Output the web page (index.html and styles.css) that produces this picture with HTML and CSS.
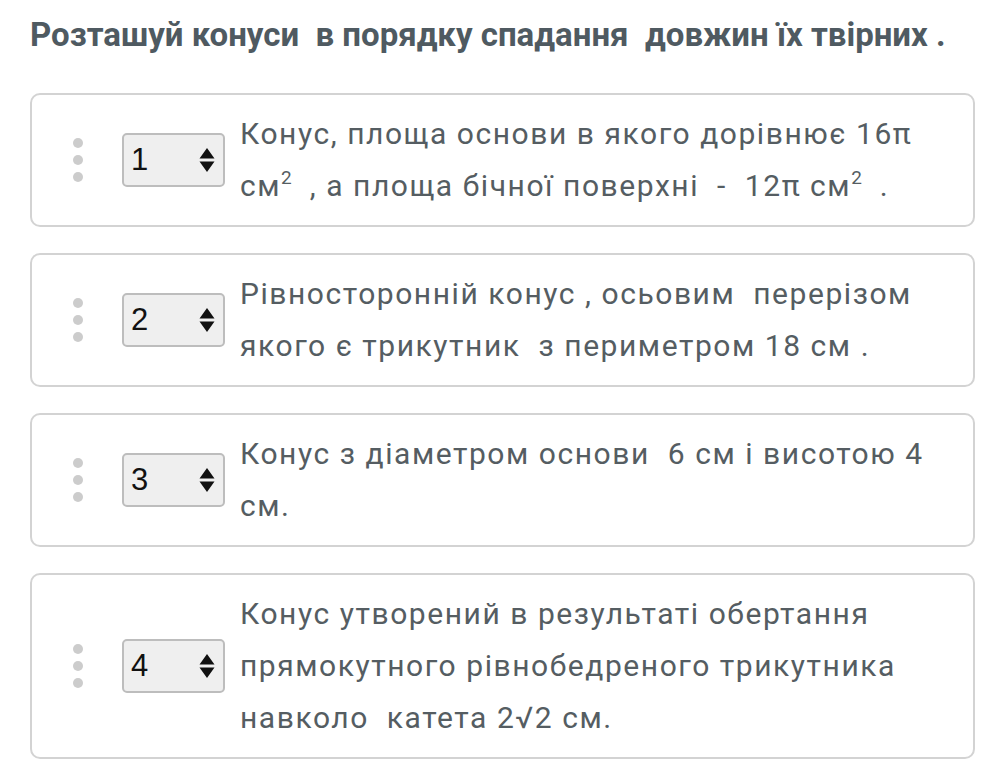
FILE: index.html
```html
<!DOCTYPE html>
<html lang="uk">
<head>
<meta charset="utf-8">
<title>Конуси</title>
<link rel="stylesheet" href="styles.css">
</head>
<body>
<main class="page">
  <h1 class="title">Розташуй конуси&nbsp; в порядку спадання&nbsp; довжин їх твірних .</h1>
  <ul class="list">
    <li class="card">
      <span class="handle"><i></i><i></i><i></i></span>
      <span class="select"><span class="select-value">1</span><svg class="arrows" viewBox="0 0 16 26" width="16" height="26"><path d="M8 1 L15.5 11.5 H0.5 Z M0.5 14.5 H15.5 L8 25 Z" fill="#111"/></svg></span>
      <p class="text">Конус, площа основи в якого дорівнює 16π см<sup>2</sup>&nbsp; , а площа бічної поверхні&nbsp; -&nbsp; 12π см<sup>2</sup>&nbsp; .</p>
    </li>
    <li class="card">
      <span class="handle"><i></i><i></i><i></i></span>
      <span class="select"><span class="select-value">2</span><svg class="arrows" viewBox="0 0 16 26" width="16" height="26"><path d="M8 1 L15.5 11.5 H0.5 Z M0.5 14.5 H15.5 L8 25 Z" fill="#111"/></svg></span>
      <p class="text">Рівносторонній конус , осьовим&nbsp; перерізом якого є трикутник&nbsp; з периметром 18 см .</p>
    </li>
    <li class="card">
      <span class="handle"><i></i><i></i><i></i></span>
      <span class="select"><span class="select-value">3</span><svg class="arrows" viewBox="0 0 16 26" width="16" height="26"><path d="M8 1 L15.5 11.5 H0.5 Z M0.5 14.5 H15.5 L8 25 Z" fill="#111"/></svg></span>
      <p class="text">Конус з діаметром основи&nbsp; 6 см і висотою 4 см.</p>
    </li>
    <li class="card">
      <span class="handle"><i></i><i></i><i></i></span>
      <span class="select"><span class="select-value">4</span><svg class="arrows" viewBox="0 0 16 26" width="16" height="26"><path d="M8 1 L15.5 11.5 H0.5 Z M0.5 14.5 H15.5 L8 25 Z" fill="#111"/></svg></span>
      <p class="text">Конус утворений в результаті обертання прямокутного рівнобедреного трикутника навколо&nbsp; катета 2√2 см.</p>
    </li>
  </ul>
</main>
</body>
</html>
```
FILE: styles.css
```css
* { box-sizing: border-box; }
html, body { margin: 0; padding: 0; background: #fff; }
body { font-family: Roboto, "Noto Sans", sans-serif; }
.page { padding: 14px 28px 0 30px; }
.title {
  margin: 0;
  font-size: 33px;
  line-height: 42px;
  font-weight: 700;
  color: #4f5a61;
  white-space: nowrap;
}
.list {
  list-style: none;
  margin: 37px 0 0 0;
  padding: 0;
  display: flex;
  flex-direction: column;
  gap: 26px;
}
.card {
  display: flex;
  align-items: center;
  border: 2px solid #d3d3d3;
  border-radius: 10px;
  padding: 13px 20px 13px 41px;
}
.handle {
  display: flex;
  flex-direction: column;
  gap: 7px;
  width: 10px;
  flex: none;
  margin-right: 39px;
}
.handle i {
  display: block;
  width: 10px;
  height: 10px;
  border-radius: 50%;
  background: #cccccc;
}
.select {
  position: relative;
  flex: none;
  width: 103px;
  height: 54px;
  background: #efefef;
  border: 2px solid #bdbdbd;
  border-radius: 5px;
  display: flex;
  align-items: center;
  padding-left: 7px;
  font-family: "Liberation Sans", Arial, sans-serif;
  font-size: 31px;
  color: #111;
  margin-right: 15px;
}
.arrows {
  position: absolute;
  right: 8px;
  top: 12px;
}
.text {
  margin: 0;
  font-size: 30px;
  letter-spacing: 1.55px;
  line-height: 52px;
  color: #555d62;
}
.text sup {
  font-size: 19px;
  line-height: 0;
  vertical-align: 12px;
  letter-spacing: 0;
}
```
